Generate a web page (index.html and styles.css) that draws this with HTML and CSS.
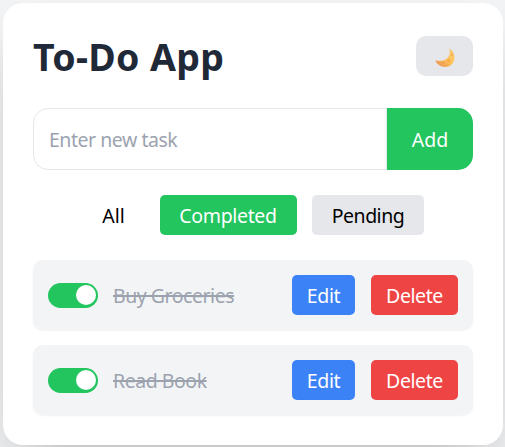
FILE: index.html
```html
<!DOCTYPE html>
<html lang="en">
<head>
<meta charset="utf-8">
<title>To-Do App</title>
<link rel="stylesheet" href="styles.css">
</head>
<body>
<main class="card">
  <header class="header">
    <h1 class="title">To-Do App</h1>
    <button class="theme" aria-label="Toggle dark mode">
      <svg class="moon" viewBox="0 0 20 20">
        <defs>
          <linearGradient id="glow" x1="1" y1="0" x2="0" y2="1">
            <stop offset="0" stop-color="#f5c578"/>
            <stop offset=".45" stop-color="#ffc65a"/>
            <stop offset="1" stop-color="#e98b50"/>
          </linearGradient>
        </defs>
        <path d="M14.900.8C18.300 3.200 20 6.700 19.300 11.200C18.600 16 14.700 19 9.800 18.900C5.700 18.800 2.200 16.700.6 13.300C.3 12.700.8 12.400 1.400 12.500C5.500 13.200 9.600 12.900 12.500 10C14.700 7.600 15.200 4.500 14.400 1.300C14.300.8 14.500.5 14.900.8Z" fill="url(#glow)"/>
        <circle cx="14" cy="12.700" r="1.900" fill="#f7b04b"/>
        <circle cx="16.800" cy="6.800" r=".9" fill="#e6a353"/>
        <circle cx="8.500" cy="15.200" r=".8" fill="#e8954a"/>
        <circle cx="12.500" cy="16.600" r=".7" fill="#eea04d"/>
      </svg>
    </button>
  </header>
  <form class="entry">
    <input class="field" type="text" placeholder="Enter new task">
    <button class="add" type="button">Add</button>
  </form>
  <nav class="filters">
    <button class="filter all">All</button>
    <button class="filter completed">Completed</button>
    <button class="filter pending">Pending</button>
  </nav>
  <ul class="tasks">
    <li class="task">
      <span class="toggle"><span class="knob"></span></span>
      <span class="name">Buy Groceries</span>
      <button class="action edit">Edit</button>
      <button class="action delete">Delete</button>
    </li>
    <li class="task">
      <span class="toggle"><span class="knob"></span></span>
      <span class="name">Read Book</span>
      <button class="action edit">Edit</button>
      <button class="action delete">Delete</button>
    </li>
  </ul>
</main>
</body>
</html>
```
FILE: styles.css
```css
* { box-sizing: border-box; }
html, body { height: 100%; }
body {
  margin: 0;
  padding: 3px 2px 2px 3px;
  overflow: hidden;
  background: #f3f4f6;
  font: 19.5px/30px "Noto Sans", "Open Sans", sans-serif;
  color: #000;
}
button, input {
  margin: 0;
  padding: 2px 0 0;
  border: 0;
  font: inherit;
  color: inherit;
}
.card {
  width: 500px;
  height: 442px;
  padding: 30px;
  border-radius: 20px;
  background: #fff;
  box-shadow: 0 31px 62px -15px rgba(0, 0, 0, .25);
}
.header {
  display: flex;
  justify-content: space-between;
  align-items: center;
  height: 45px;
  margin-bottom: 30px;
}
.title {
  margin: 0;
  padding-top: 1px;
  font-size: 37.500px;
  line-height: 45px;
  font-weight: 700;
  letter-spacing: .3px;
  color: #1f2937;
}
.theme {
  display: flex;
  align-items: center;
  justify-content: center;
  width: 57px;
  height: 40px;
  border-radius: 10px;
  background: #e5e7eb;
}
.moon { width: 20px; height: 20px; margin-top: 3px; }
.entry { display: flex; height: 62px; margin: 0 0 25px; }
.field {
  width: 354px;
  padding: 2px 15px 0;
  border: 1px solid #e5e7eb;
  border-radius: 15px 0 0 15px;
  background: #fff;
  letter-spacing: -.47px;
}
.field::placeholder { color: #9ca3af; opacity: 1; }
.add {
  width: 86px;
  border-radius: 0 15px 15px 0;
  background: #22c55e;
  color: #fff;
}
.filters { display: flex; height: 40px; margin: 0 0 25px 50px; gap: 15px; }
.filter { border-radius: 5px; background: transparent; }
.all { width: 62px; padding-right: 1px; }
.completed { width: 137px; padding-right: 1px; background: #22c55e; color: #fff; letter-spacing: -.35px; }
.pending { width: 112px; background: #e5e7eb; letter-spacing: -.5px; }
.tasks {
  display: flex;
  flex-direction: column;
  gap: 15px;
  margin: 0;
  padding: 0;
  list-style: none;
}
.task {
  display: flex;
  align-items: center;
  height: 70px;
  padding: 0 15px;
  border-radius: 10px;
  background: #f3f4f6;
  box-shadow: 0 1px 2px rgba(0, 0, 0, .05);
}
.toggle {
  display: flex;
  justify-content: flex-end;
  width: 50px;
  height: 25px;
  padding: 2px;
  border-radius: 13px;
  background: #22c55e;
}
.knob { width: 20px; height: 20px; border-radius: 50%; background: #fff; }
.name {
  flex: 1;
  margin-left: 15px;
  padding-top: 2px;
  color: #9ca3af;
  text-decoration: line-through 2px;
  letter-spacing: -.47px;
}
.action { height: 40px; border-radius: 5px; color: #fff; letter-spacing: -.4px; }
.edit { width: 63px; margin-right: 16px; background: #3b82f6; }
.delete { width: 87px; background: #ef4444; }
```
